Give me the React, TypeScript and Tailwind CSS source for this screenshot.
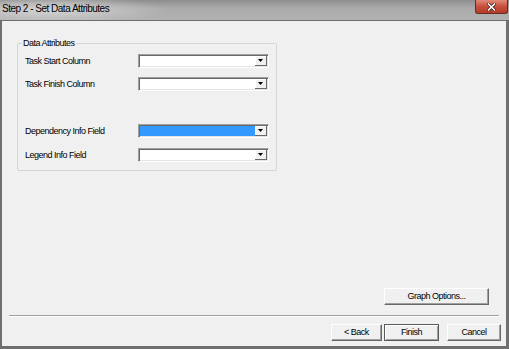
import React from "react";

const rows = [
  { label: "Task Start Column", mt: "mt-[5px]", selected: false },
  { label: "Task Finish Column", mt: "mt-[9px]", selected: false },
  { label: "Dependency Info Field", mt: "mt-[33px]", selected: true },
  { label: "Legend Info Field", mt: "mt-[10px]", selected: false },
];

function Combo({ selected }: { selected: boolean }) {
  return (
    <div className="flex h-[14px] w-[131px] border-t border-l border-b border-r border-t-[#a0a0a0] border-l-[#a0a0a0] border-b-white border-r-white shadow-[inset_1px_1px_0_#696969,inset_-1px_-1px_0_#e3e3e3] p-[1px] pl-[1px] pt-[1px]">
      <div className={selected ? "flex-1 bg-[#3399ff]" : "flex-1 bg-white"} />
      <div className="flex w-[12px] items-center justify-center bg-[#f0f0f0] border-r border-b border-[#696969] shadow-[inset_1px_1px_0_#ffffff]">
        <svg width="5" height="3" viewBox="0 0 5 3">
          <path d="M0 0h5L2.5 3z" fill="#000" />
        </svg>
      </div>
    </div>
  );
}

function WinButton({
  children,
  className = "",
  isDefault = false,
}: {
  children: React.ReactNode;
  className?: string;
  isDefault?: boolean;
}) {
  return (
    <button
      className={
        "flex h-[17px] items-center justify-center bg-[#f0f0f0] text-[9px] tracking-[-0.5px] text-black " +
        (isDefault
          ? "border border-[#5a5a5a] shadow-[inset_1px_1px_0_#ffffff,inset_-1px_-1px_0_#a0a0a0] "
          : "border border-t-white border-l-white border-b-[#696969] border-r-[#696969] shadow-[inset_-1px_-1px_0_#a0a0a0] ") +
        className
      }
    >
      {children}
    </button>
  );
}

export default function App() {
  return (
    <div className="flex h-[349px] w-[509px] flex-col overflow-hidden bg-[#9c9c9c] font-['Liberation_Sans',Arial,sans-serif]">
      {/* title bar */}
      <div className="flex h-[21px] items-start border-b border-[#6e6e6e] bg-[radial-gradient(ellipse_120px_14px_at_50px_10px,#d4d4d4,transparent),linear-gradient(to_bottom,#8e8e8e,#aaaaaa_40%,#b2b2b2)]">
        <span className="ml-[2px] mt-[3px] text-[10px] leading-[12px] tracking-[-0.5px] text-black">
          Step 2 - Set Data Attributes
        </span>
        <div className="ml-auto mr-[1px] flex h-[14px] w-[33px] items-center justify-center rounded-b-[3px] border border-t-0 border-[#6b2a22] bg-[linear-gradient(to_bottom,#e08a78,#c7503c_50%,#b33a26)]">
          <svg width="9" height="8" viewBox="0 0 9 8">
            <path d="M1.5 1l6 6M7.5 1l-6 6" stroke="#3a1410" strokeWidth="3" strokeLinecap="square" />
            <path d="M1.5 1l6 6M7.5 1l-6 6" stroke="#ffffff" strokeWidth="1.6" strokeLinecap="square" />
          </svg>
        </div>
      </div>

      {/* body */}
      <div className="flex flex-1 flex-col border-l-2 border-r-[3px] border-b-[3px] border-[#6f6f6f] bg-[#f0f0f0]">
        <fieldset className="ml-[15px] mt-[16px] h-[134px] w-[260px] rounded-[2px] border border-[#d5d5d5] pl-[7px]">
          <legend className="ml-[-3px] px-[1px] text-[9px] leading-[12px] tracking-[-0.5px] text-black">
            Data Attributes
          </legend>
          {rows.map((r) => (
            <div key={r.label} className={"grid grid-cols-[113px_131px] items-center " + r.mt}>
              <span className="text-[9px] leading-[14px] tracking-[-0.5px] text-black">{r.label}</span>
              <Combo selected={r.selected} />
            </div>
          ))}
        </fieldset>

        <div className="flex-1" />

        <div className="flex justify-end pr-[17px]">
          <WinButton className="w-[105px]">Graph Options...</WinButton>
        </div>

        <div className="mx-[7px] mt-[10px] border-t border-b border-t-[#a0a0a0] border-b-white" />

        <div className="mb-[5px] mt-[7px] flex justify-end pr-[5px]">
          <WinButton className="w-[51px]">&lt; Back</WinButton>
          <WinButton className="ml-[2px] w-[55px]" isDefault>
            Finish
          </WinButton>
          <WinButton className="ml-[8px] w-[54px]">Cancel</WinButton>
        </div>
      </div>
    </div>
  );
}
